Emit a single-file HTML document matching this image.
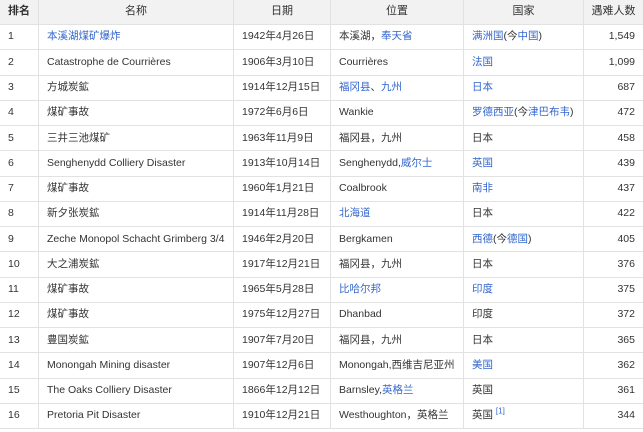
<!DOCTYPE html>
<html><head><meta charset="utf-8"><style>
body{margin:0;background:#fff;}
table{border-collapse:collapse;font-family:"Liberation Sans","Noto Sans CJK SC",sans-serif;font-size:10.5px;line-height:13px;color:#333;table-layout:fixed;width:644px;position:absolute;left:-1px;top:-1px;}
td,th{border:1px solid #e2e2e2;padding:0 0 0 8px;white-space:nowrap;overflow:hidden;vertical-align:middle;}
td>span,th>span{display:inline-block;height:13px;line-height:13px;vertical-align:middle;}
th{background:#f2f2f2;font-weight:normal;text-align:center;height:24px;padding:0;font-size:11px;color:#333;}
th:first-child{font-weight:bold;}
td{height:24.27px;}
td.n{text-align:right;padding:0 8px 0 0;}
a{color:#3366cc;text-decoration:none;}
sup{font-size:8px;color:#3366cc;line-height:0;}
</style></head><body>
<table>
<colgroup><col style="width:39px"><col style="width:195px"><col style="width:97px"><col style="width:133px"><col style="width:120px"><col style="width:60px"></colgroup>
<tr><th><span>排名</span></th><th><span>名称</span></th><th><span>日期</span></th><th><span>位置</span></th><th><span>国家</span></th><th><span>遇难人数</span></th></tr>
<tr><td><span>1</span></td><td><span><a>本溪湖煤矿爆炸</a></span></td><td><span>1942年4月26日</span></td><td><span>本溪湖，<a>奉天省</a></span></td><td><span><a>满洲国</a>(今<a>中国</a>)</span></td><td class="n"><span>1,549</span></td></tr>
<tr><td><span>2</span></td><td><span>Catastrophe de Courrières</span></td><td><span>1906年3月10日</span></td><td><span>Courrières</span></td><td><span><a>法国</a></span></td><td class="n"><span>1,099</span></td></tr>
<tr><td><span>3</span></td><td><span>方城炭鉱</span></td><td><span>1914年12月15日</span></td><td><span><a>福冈县</a>、<a>九州</a></span></td><td><span><a>日本</a></span></td><td class="n"><span>687</span></td></tr>
<tr><td><span>4</span></td><td><span>煤矿事故</span></td><td><span>1972年6月6日</span></td><td><span>Wankie</span></td><td><span><a>罗德西亚</a>(今<a>津巴布韦</a>)</span></td><td class="n"><span>472</span></td></tr>
<tr><td><span>5</span></td><td><span>三井三池煤矿</span></td><td><span>1963年11月9日</span></td><td><span>福冈县，九州</span></td><td><span>日本</span></td><td class="n"><span>458</span></td></tr>
<tr><td><span>6</span></td><td><span>Senghenydd Colliery Disaster</span></td><td><span>1913年10月14日</span></td><td><span>Senghenydd,<a>威尔士</a></span></td><td><span><a>英国</a></span></td><td class="n"><span>439</span></td></tr>
<tr><td><span>7</span></td><td><span>煤矿事故</span></td><td><span>1960年1月21日</span></td><td><span>Coalbrook</span></td><td><span><a>南非</a></span></td><td class="n"><span>437</span></td></tr>
<tr><td><span>8</span></td><td><span>新夕张炭鉱</span></td><td><span>1914年11月28日</span></td><td><span><a>北海道</a></span></td><td><span>日本</span></td><td class="n"><span>422</span></td></tr>
<tr><td><span>9</span></td><td><span>Zeche Monopol Schacht Grimberg 3/4</span></td><td><span>1946年2月20日</span></td><td><span>Bergkamen</span></td><td><span><a>西德</a>(今<a>德国</a>)</span></td><td class="n"><span>405</span></td></tr>
<tr><td><span>10</span></td><td><span>大之浦炭鉱</span></td><td><span>1917年12月21日</span></td><td><span>福冈县，九州</span></td><td><span>日本</span></td><td class="n"><span>376</span></td></tr>
<tr><td><span>11</span></td><td><span>煤矿事故</span></td><td><span>1965年5月28日</span></td><td><span><a>比哈尔邦</a></span></td><td><span><a>印度</a></span></td><td class="n"><span>375</span></td></tr>
<tr><td><span>12</span></td><td><span>煤矿事故</span></td><td><span>1975年12月27日</span></td><td><span>Dhanbad</span></td><td><span>印度</span></td><td class="n"><span>372</span></td></tr>
<tr><td><span>13</span></td><td><span>豊国炭鉱</span></td><td><span>1907年7月20日</span></td><td><span>福冈县，九州</span></td><td><span>日本</span></td><td class="n"><span>365</span></td></tr>
<tr><td><span>14</span></td><td><span>Monongah Mining disaster</span></td><td><span>1907年12月6日</span></td><td><span>Monongah,西维吉尼亚州</span></td><td><span><a>美国</a></span></td><td class="n"><span>362</span></td></tr>
<tr><td><span>15</span></td><td><span>The Oaks Colliery Disaster</span></td><td><span>1866年12月12日</span></td><td><span>Barnsley,<a>英格兰</a></span></td><td><span>英国</span></td><td class="n"><span>361</span></td></tr>
<tr><td><span>16</span></td><td><span>Pretoria Pit Disaster</span></td><td><span>1910年12月21日</span></td><td><span>Westhoughton，英格兰</span></td><td><span>英国 <sup>[1]</sup></span></td><td class="n"><span>344</span></td></tr>
</table>
</body></html>
